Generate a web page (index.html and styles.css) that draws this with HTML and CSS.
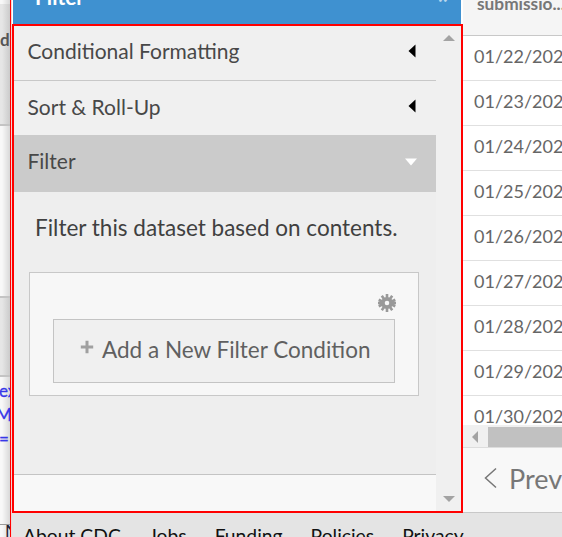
FILE: index.html
```html
<!DOCTYPE html>
<html lang="en">
<head>
<meta charset="utf-8">
<title>Filter</title>
<link rel="stylesheet" href="styles.css">
</head>
<body>
<div class="page">
  <aside class="backdrop">
    <div class="strip s-top"></div>
    <div class="strip s-head"><span>d</span></div>
    <div class="strip s-blank"></div>
    <div class="strip s-band"></div>
    <div class="strip s-code"><span>ex</span><span>M</span><span>=</span></div>
    <div class="strip s-end"><span>N</span></div>
  </aside>
  <div class="app">
    <div class="upper">
      <div class="side">
        <header class="title"><span class="title-text">Filter</span><span class="close">»</span></header>
        <section class="panel">
          <div class="content">
            <div class="row first"><span>Conditional Formatting</span><svg width="8" height="14" viewBox="0 0 8 14"><path d="M7.500 .5v13L.5 7z" fill="#000"/></svg></div>
            <div class="row second"><span>Sort &amp; Roll-Up</span><svg width="8" height="14" viewBox="0 0 8 14"><path d="M7.500 .5v13L.5 7z" fill="#000"/></svg></div>
            <div class="row active"><span>Filter</span><svg width="14" height="8" viewBox="0 0 14 8"><path d="M1 .5h12L7 7.500z" fill="#fff"/></svg></div>
            <div class="body">
              <p>Filter this dataset based on contents.</p>
              <div class="box">
                <svg class="gear" width="20" height="20" viewBox="-10 -10 20 20"><g fill="none" stroke="#999"><circle r="4.200" stroke-width="3.800"/><path stroke-width="2.600" d="M0-5V-9M0 5V9M5 0H9M-5 0H-9M3-4.100L5.200-7.200M-3-4.100L-5.200-7.200M3 4.100L5.200 7.200M-3 4.100L-5.200 7.200M4.800-1.600L8.300-3.200M-4.800-1.600L-8.300-3.200M4.800 1.600L8.300 3.200M-4.800 1.600L-8.300 3.200"/></g></svg>
                <button class="add"><svg width="14" height="14" viewBox="0 0 14 14"><path d="M7 .8v12.400M.8 7h12.400" stroke="#a0a0a0" stroke-width="3"/></svg><span>Add a New Filter Condition</span></button>
              </div>
            </div>
            <div class="tail"></div>
          </div>
          <div class="vscroll">
            <svg width="12" height="6" viewBox="0 0 12 6"><path d="M6 0l6 6H0z" fill="#a3a3a3"/></svg>
            <svg width="12" height="6" viewBox="0 0 12 6"><path d="M0 0h12L6 6z" fill="#a3a3a3"/></svg>
          </div>
        </section>
      </div>
      <main class="table">
        <div class="thead"><span class="t-head">submissio...</span></div>
        <div class="rows">
          <div class="cell">01/22/202</div>
          <div class="cell">01/23/202</div>
          <div class="cell">01/24/202</div>
          <div class="cell">01/25/202</div>
          <div class="cell">01/26/202</div>
          <div class="cell">01/27/202</div>
          <div class="cell">01/28/202</div>
          <div class="cell">01/29/202</div>
          <div class="cell">01/30/202</div>
        </div>
        <div class="hscroll"><svg width="6" height="12" viewBox="0 0 6 12"><path d="M6 0v12L0 6z" fill="#a3a3a3"/></svg><div class="thumb"></div></div>
        <div class="pager"><svg width="13" height="22" viewBox="0 0 13 22"><path d="M12 1.500L1.500 11 12 20.500" fill="none" stroke="#777" stroke-width="1.500"/></svg><span>Prev</span></div>
      </main>
    </div>
    <footer><a>About CDC</a><a>Jobs</a><a>Funding</a><a>Policies</a><a>Privacy</a></footer>
  </div>
</div>
</body>
</html>
```
FILE: styles.css
```css
* { box-sizing: border-box; }
body { margin: 0; font-family: Lato, sans-serif; color: #484848; overflow: hidden; }
svg { display: block; flex: none; }
.page { display: flex; width: 562px; height: 537px; overflow: hidden; background: #fff; }
.backdrop { width: 12px; flex: none; border-right: 1px solid #f1d5d5; box-shadow: inset -1px 0 #f00; }
.strip { width: 10px; overflow: hidden; background: linear-gradient(90deg, #f8f8f8 20%, #d8d8d8); font-size: 17px; }
.strip span { display: block; }
.s-top { height: 4px; }
.s-head { height: 122px; background: linear-gradient(90deg, #e6e6e6 20%, #cbcbcb); border-bottom: 2px solid #c4c4c4; padding-top: 25px; line-height: 22px; font-weight: 700; color: #555; }
.s-blank { height: 170px; }
.s-band { height: 81px; background: linear-gradient(90deg, #e6e6e6 20%, #cbcbcb); border: solid #c4c4c4; border-width: 2px 0; }
.s-code { height: 148px; border-bottom: 1px solid #999; color: #3838e8; padding-top: 2px; line-height: 24px; -webkit-text-stroke: .3px #3838e8; }
.s-code span { margin-left: -1px; }
.s-code span:nth-child(2) { margin-left: -4px; }
.s-end { height: 12px; line-height: 12px; color: #223; padding-left: 5px; }
.app { width: 550px; flex: none; display: flex; flex-direction: column; }
.upper { display: flex; height: 513px; flex: none; }
.side { width: 451px; flex: none; }
.title { height: 24px; margin-left: 1px; margin-right: 2px; background: #3f91d0; color: #fff; display: flex; justify-content: space-between; overflow: hidden; padding: 0 10px 0 22px; font-weight: 700; }
.title-text { font-size: 21px; line-height: 26px; margin-top: -16px; height: 26px; }
.close { font-size: 30px; line-height: 24px; margin-top: -20px; color: #b9d7ee; }
.panel { height: 489px; border: 2px solid #f00; display: flex; background: #eee; }
.content { width: 422px; display: flex; flex-direction: column; }
.row { height: 54px; background: #f0f0f0; display: flex; align-items: center; justify-content: space-between; padding: 0 20px 3px 13.5px; font-size: 21px; line-height: 26px; white-space: nowrap; }
.row.first { height: 55px; border-bottom: 1px solid #c8c8c8; padding-bottom: 5px; }
.row.second { padding-bottom: 2px; }
.row.second svg { margin-top: -2px; }
.row.active { height: 57px; background: #cbcbcb; padding-right: 18px; padding-bottom: 5px; }
.row.active svg { margin-top: 1px; }
.body { height: 282px; padding: 22px 17px 0 15px; }
.body p { margin: 0; height: 58px; padding-left: 6px; font-size: 22.5px; line-height: 28px; white-space: nowrap; color: #404040; }
.box { height: 124px; border: 1px solid #c8c8c8; background: #f7f7f7; padding: 20px 23px 0; display: flex; flex-direction: column; }
.gear { margin-left: auto; margin-right: -2px; }
.add { margin: 6px 0 0; height: 64px; border: 1px solid #c4c4c4; background: #f0f0f0; display: flex; align-items: center; padding: 0 0 2px 26px; gap: 8px; font: 22.5px/30px Lato, sans-serif; color: #606060; white-space: nowrap; }
.add svg { margin-top: -6px; }
.tail { flex: 1; background: #f8f8f8; border-top: 1px solid #c4c4c4; }
.vscroll { width: 25px; background: #f0f0f0; display: flex; flex-direction: column; justify-content: space-between; align-items: center; padding: 9px 0; }
.table { width: 99px; display: flex; flex-direction: column; overflow: hidden; }
.thead { height: 36px; flex: none; background: #f5f5f5; border-bottom: 1px solid #c8c8c8; padding-left: 14px; font-size: 17.3px; font-weight: 700; line-height: 22px; color: #777; white-space: nowrap; overflow: hidden; }
.t-head { display: block; margin-top: -7px; }
.rows { height: 389px; overflow: hidden; flex: none; }
.cell { height: 45px; border-bottom: 1px solid #e0e0e0; padding-left: 11px; font-size: 18px; line-height: 41px; color: #666; white-space: nowrap; }
.hscroll { height: 23px; flex: none; background: #f0f0f0; border-bottom: 1px solid #ddd; display: flex; padding: 2px 0 0 9px; align-items: center; gap: 10px; }
.thumb { height: 20px; flex: 1; background: #c1c1c1; }
.pager { flex: 1; background: #f8f8f8; border-bottom: 1px solid #c8c8c8; display: flex; align-items: center; padding: 0 0 4px 21px; gap: 12px; font-size: 27px; color: #777; overflow: hidden; }
footer { flex: 1; background: #e4e4e4; display: flex; padding: 10px 0 0 11px; gap: 28px; font-size: 19.3px; line-height: 26px; color: #111; white-space: nowrap; overflow: hidden; }
```
